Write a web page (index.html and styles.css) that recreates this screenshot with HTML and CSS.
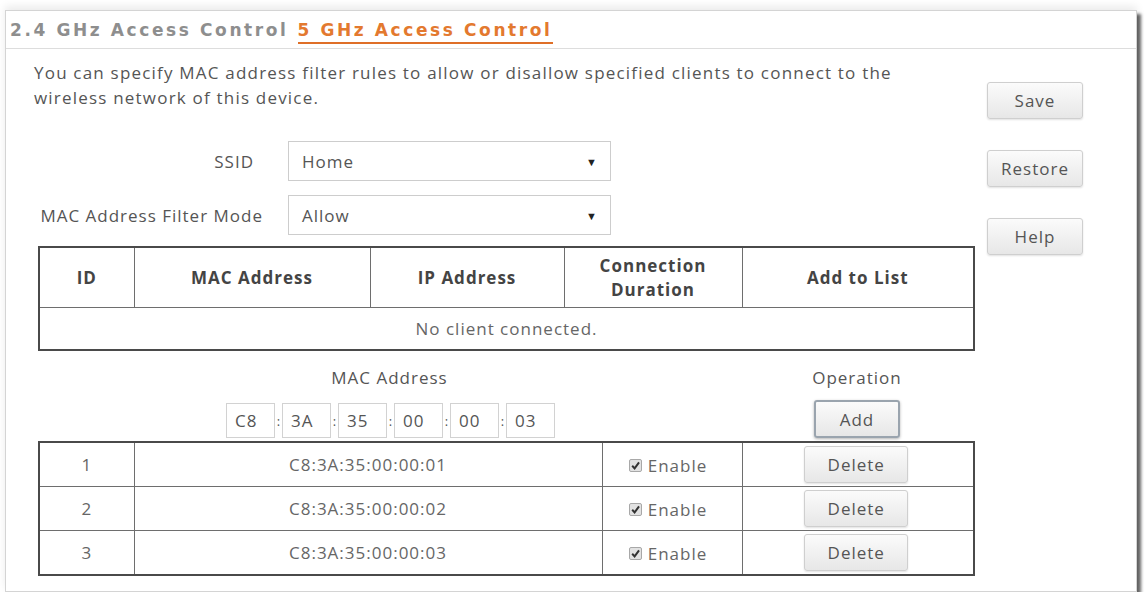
FILE: index.html
```html
<!DOCTYPE html>
<html lang="en">
<head>
<meta charset="utf-8">
<title>Access Control</title>
<link rel="stylesheet" href="styles.css">
</head>
<body>
<div class="panel">
  <div class="tabs">
    <span class="tab">2.4 GHz Access Control</span>
    <span class="tab tab-active">5 GHz Access Control</span>
  </div>
  <div class="content">
    <div class="main">
      <p class="intro">You can specify MAC address filter rules to allow or disallow specified clients to connect to the<br>wireless network of this device.</p>

      <div class="field field-ssid">
        <label>SSID</label>
        <div class="select"><span>Home</span><span class="arrow">&#9660;</span></div>
      </div>
      <div class="field field-mode">
        <label>MAC Address Filter Mode</label>
        <div class="select"><span>Allow</span><span class="arrow">&#9660;</span></div>
      </div>

      <table class="grid clients">
        <colgroup>
          <col class="c-id"><col class="c-mac"><col class="c-ip"><col class="c-dur"><col class="c-add">
        </colgroup>
        <thead>
          <tr>
            <th>ID</th>
            <th>MAC Address</th>
            <th>IP Address</th>
            <th>Connection<br>Duration</th>
            <th>Add to List</th>
          </tr>
        </thead>
        <tbody>
          <tr><td colspan="5" class="empty">No client connected.</td></tr>
        </tbody>
      </table>

      <div class="add-row">
        <div class="add-mac">
          <div class="cap">MAC Address</div>
          <div class="octets">
            <span class="octet">C8</span>
            <span class="sep">:</span><span class="octet">3A</span>
            <span class="sep">:</span><span class="octet">35</span>
            <span class="sep">:</span><span class="octet">00</span>
            <span class="sep">:</span><span class="octet">00</span>
            <span class="sep">:</span><span class="octet">03</span>
          </div>
        </div>
        <div class="add-op">
          <div class="cap">Operation</div>
          <button class="btn btn-add">Add</button>
        </div>
      </div>

      <table class="grid rules">
        <colgroup>
          <col class="c-id"><col class="r-mac"><col class="r-en"><col class="c-add">
        </colgroup>
        <tbody>
          <tr>
            <td>1</td>
            <td>C8:3A:35:00:00:01</td>
            <td><span class="enable"><span class="check"><svg viewBox="0 0 10 10"><path d="M2 5.2 L4.2 7.6 L8.2 2.2"/></svg></span>Enable</span></td>
            <td><button class="btn btn-del">Delete</button></td>
          </tr>
          <tr>
            <td>2</td>
            <td>C8:3A:35:00:00:02</td>
            <td><span class="enable"><span class="check"><svg viewBox="0 0 10 10"><path d="M2 5.2 L4.2 7.6 L8.2 2.2"/></svg></span>Enable</span></td>
            <td><button class="btn btn-del">Delete</button></td>
          </tr>
          <tr>
            <td>3</td>
            <td>C8:3A:35:00:00:03</td>
            <td><span class="enable"><span class="check"><svg viewBox="0 0 10 10"><path d="M2 5.2 L4.2 7.6 L8.2 2.2"/></svg></span>Enable</span></td>
            <td><button class="btn btn-del">Delete</button></td>
          </tr>
        </tbody>
      </table>
    </div>

    <div class="side">
      <button class="btn btn-side">Save</button>
      <button class="btn btn-side">Restore</button>
      <button class="btn btn-side">Help</button>
    </div>
  </div>
</div>
</body>
</html>
```

FILE: styles.css
```css
html, body {
  margin: 0;
  background: #fff;
}

body {
  font-family: "Open Sans", "Liberation Sans", sans-serif;
  font-size: 17px;
  letter-spacing: 1px;
  color: #555;
}

/* outer card */
.panel {
  box-sizing: border-box;
  margin: 10px 9px 0 5px;
  height: 582px;
  border: 1px solid #d4d4d4;
  background: #fff;
  box-shadow: 4px 4px 3px rgba(0, 0, 0, 0.6), 0 -4px 8px rgba(0, 0, 0, 0.08);
}

/* tab strip */
.tabs {
  display: flex;
  align-items: flex-start;
  gap: 9px;
  height: 28px;
  padding: 9px 0 0 4px;
  border-bottom: 1px solid #ddd;
}

.tab {
  font-family: "DejaVu Sans", Verdana, sans-serif;
  font-weight: bold;
  font-size: 17px;
  letter-spacing: 2.6px;
  line-height: 20px;
  color: #8e8e8e;
  padding-bottom: 2px;
}

.tab-active {
  color: #e3792f;
  border-bottom: 2px solid #df6f27;
}

/* body: main column + button column */
.content {
  display: flex;
  padding-left: 28px;
}

.main {
  width: 940px;
}

.intro {
  margin: 11px 0 0;
  line-height: 25px;
  letter-spacing: 1.2px;
}

.field {
  display: grid;
  grid-template-columns: 229px 323px;
  column-gap: 25px;
  align-items: center;
}

.field-ssid {
  margin-top: 31px;
}

.field-ssid label {
  padding-right: 9px;
}

.field-mode {
  margin-top: 14px;
}

.field label {
  text-align: right;
}

.select {
  box-sizing: border-box;
  height: 40px;
  display: flex;
  align-items: center;
  justify-content: space-between;
  padding: 0 13px 0 13px;
  border: 1px solid #cdcdcd;
  color: #555;
}

.arrow {
  font-size: 11px;
  letter-spacing: 0;
  color: #222;
}

/* tables */
.grid {
  margin-left: 4px;
  width: 935px;
  border-collapse: collapse;
  border: 2px solid #4a4a4a;
  table-layout: fixed;
}

.grid th,
.grid td {
  border: 1px solid #6e6e6e;
  text-align: center;
  padding: 0;
}

.c-id { width: 95px; }
.c-mac { width: 236px; }
.c-ip { width: 194px; }
.c-dur { width: 178px; }
.c-add { width: 232px; }
.r-mac { width: 468px; }
.r-en { width: 140px; }

.clients {
  margin-top: 11px;
}

.clients th {
  height: 59px;
  line-height: 24px;
  font-weight: bold;
  color: #444;
}

.clients td.empty {
  height: 41px;
  color: #666;
}

/* add form between the tables */
.add-row {
  display: flex;
  padding-top: 16px;
}

.add-mac {
  margin-left: 4px;
  width: 703px;
  display: flex;
  flex-direction: column;
  align-items: center;
}

.add-op {
  width: 232px;
  display: flex;
  flex-direction: column;
  align-items: center;
}

.cap {
  line-height: 22px;
}

.octets {
  display: flex;
  align-items: center;
  margin-top: 14px;
  margin-left: 2px;
}

.octet {
  box-sizing: border-box;
  width: 49px;
  height: 35px;
  line-height: 33px;
  padding-left: 8px;
  border: 1px solid #d2d2d2;
}

.sep {
  width: 7px;
  text-align: center;
  font-size: 13px;
  letter-spacing: 0;
}

/* buttons */
.btn {
  font-family: "Open Sans", "Liberation Sans", sans-serif;
  font-size: 17px;
  letter-spacing: 1px;
  color: #555;
  background: linear-gradient(#fbfbfb, #e7e7e7);
  border: 1px solid #cfcfcf;
  border-radius: 3px;
  box-shadow: 0 1px 2px rgba(0, 0, 0, 0.12);
  padding: 0;
}

.btn-add {
  margin-top: 11px;
  width: 86px;
  height: 38px;
  border: 2px solid #9aa4ae;
  box-shadow: 0 1px 3px rgba(0, 0, 0, 0.3);
}

.rules {
  margin-top: 3px;
}

.rules td {
  height: 43px;
  color: #666;
}

.btn-del {
  width: 104px;
  height: 37px;
  margin-left: -3px;
}

.enable {
  display: inline-flex;
  align-items: center;
  gap: 6px;
  margin-left: -8px;
}

.check {
  width: 11px;
  height: 11px;
  border: 1px solid #a8a8a8;
  border-radius: 2px;
  background: #e2e2e2;
  display: inline-flex;
}

.check svg {
  width: 11px;
  height: 11px;
  fill: none;
  stroke: #333;
  stroke-width: 1.8;
}

/* right-hand action buttons */
.side {
  margin-left: 13px;
  padding-top: 33px;
  display: flex;
  flex-direction: column;
  gap: 31px;
}

.btn-side {
  width: 96px;
  height: 37px;
}
```
